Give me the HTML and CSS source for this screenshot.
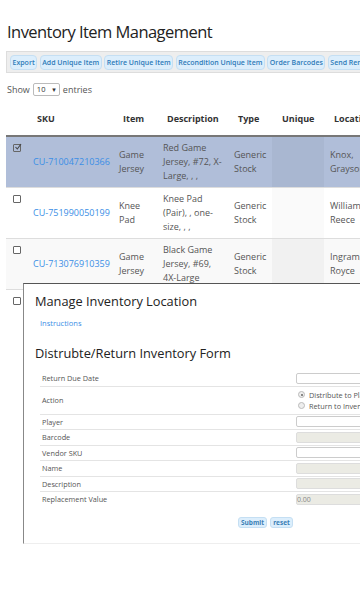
FILE: index.html
```html
<!DOCTYPE html>
<html>
<head>
<meta charset="utf-8">
<link rel="stylesheet" href="styles.css">
</head>
<body>
<h1 class="title">Inventory Item Management</h1>
<div class="toolbar">
  <button class="tbtn">Export</button>
  <button class="tbtn">Add Unique Item</button>
  <button class="tbtn">Retire Unique Item</button>
  <button class="tbtn">Recondition Unique Item</button>
  <button class="tbtn">Order Barcodes</button>
  <button class="tbtn">Send Reminders</button>
</div>
<div class="length">Show <span class="select">10 <span class="caret">▾</span></span> entries</div>
<div class="tablewrap">
<table class="grid">
  <colgroup>
    <col class="c0"><col class="c1"><col class="c2"><col class="c3"><col class="c4"><col class="c5"><col class="c6">
  </colgroup>
  <thead>
    <tr><th></th><th>SKU</th><th>Item</th><th>Description</th><th>Type</th><th>Unique</th><th>Location</th></tr>
  </thead>
  <tbody>
    <tr class="sel">
      <td><span class="cb checked"><svg viewBox="0 0 8 8" width="8" height="8"><path d="M1.5 4 L3.3 6 L7 1" fill="none" stroke="#444" stroke-width="1.1"/></svg></span></td>
      <td class="mid"><a class="sku">CU-710047210366</a></td>
      <td class="mid">Game<br>Jersey</td>
      <td>Red Game<br>Jersey, #72, X-<br>Large, , ,</td>
      <td class="mid">Generic<br>Stock</td>
      <td class="sorted"></td>
      <td class="mid">Knox,<br>Grayson</td>
    </tr>
    <tr class="even">
      <td><span class="cb"></span></td>
      <td class="mid"><a class="sku">CU-751990050199</a></td>
      <td class="mid">Knee<br>Pad</td>
      <td>Knee Pad<br>(Pair), , one-<br>size, , ,</td>
      <td class="mid">Generic<br>Stock</td>
      <td class="sorted"></td>
      <td class="mid">William,<br>Reece</td>
    </tr>
    <tr class="odd">
      <td><span class="cb"></span></td>
      <td class="mid"><a class="sku">CU-713076910359</a></td>
      <td class="mid">Game<br>Jersey</td>
      <td>Black Game<br>Jersey, #69,<br>4X-Large</td>
      <td class="mid">Generic<br>Stock</td>
      <td class="sorted"></td>
      <td class="mid">Ingram,<br>Royce</td>
    </tr>
    <tr class="even">
      <td><span class="cb"></span></td>
      <td class="mid"><a class="sku">CU-713076910360</a></td>
      <td class="mid">Game<br>Jersey</td>
      <td>Black Game<br>Jersey, #70,<br>4X-Large</td>
      <td class="mid">Generic<br>Stock</td>
      <td class="sorted"></td>
      <td class="mid">Ingram,<br>Royce</td>
    </tr>
  </tbody>
</table>

<div class="modal">
  <h2 class="mtitle">Manage Inventory Location</h2>
  <a class="instr">Instructions</a>
  <h2 class="ftitle">Distrubte/Return Inventory Form</h2>
  <div class="form">
    <div class="frow"><span class="lbl">Return Due Date</span><span class="inp"></span></div>
    <div class="frow act"><span class="lbl">Action</span>
      <span class="radios">
        <span class="radio"><span class="dot on"></span>Distribute to Player</span>
        <span class="radio"><span class="dot"></span>Return to Inventory</span>
      </span>
    </div>
    <div class="frow"><span class="lbl">Player</span><span class="inp"></span></div>
    <div class="frow"><span class="lbl">Barcode</span><span class="inp dis"></span></div>
    <div class="frow"><span class="lbl">Vendor SKU</span><span class="inp"></span></div>
    <div class="frow"><span class="lbl">Name</span><span class="inp dis"></span></div>
    <div class="frow"><span class="lbl">Description</span><span class="inp dis"></span></div>
    <div class="frow last"><span class="lbl">Replacement Value</span><span class="inp dis">0.00</span></div>
  </div>
  <div class="actions">
    <button class="sbtn">Submit</button><button class="sbtn">reset</button>
  </div>
</div>
</div>
</body>
</html>
```
FILE: styles.css
```css
html, body { margin: 0; padding: 0; overflow: hidden; background: #fff; }
body { font-family: "Open Sans", "DejaVu Sans", sans-serif; color: #333; width: 360px; height: 600px; }
.title { font-weight: 400; font-size: 16.5px; letter-spacing: -0.55px; margin: 0; padding: 20px 0 0 7px; height: 31px; line-height: 24px; color: #222; white-space: nowrap; }
.toolbar { margin-left: 6px; width: 420px; height: 20px; background: #eee; border: 1px solid #ddd; display: flex; align-items: center; gap: 2.5px; padding-left: 3px; white-space: nowrap; overflow: hidden; }
.tbtn { font-family: inherit; font-size: 7px; font-weight: 600; color: #2e7ab8; background: #dceefc; border: 1px solid #c5dff3; border-radius: 4px; height: 15px; padding: 0 1.5px; line-height: 13px; flex: none; }
.length { margin: 10px 0 0 7px; font-size: 9px; color: #555; display: flex; align-items: center; gap: 3px; height: 12px; }
.select { display: inline-flex; align-items: center; justify-content: space-between; width: 19px; height: 11px; border: 1px solid #bbb; border-radius: 2px; padding: 0 3px; font-size: 7.5px; color: #333; }
.caret { font-size: 7px; }
.tablewrap { position: relative; margin-top: 7px; }
.grid { margin-left: 6px; border-collapse: collapse; table-layout: fixed; width: 420px; font-size: 9px; line-height: 14px; color: #555; }
.c0 { width: 21px; } .c1 { width: 86px; } .c2 { width: 44px; } .c3 { width: 71px; } .c4 { width: 44px; } .c5 { width: 52px; } .c6 { width: 102px; }
.grid th { text-align: left; font-weight: 700; color: #333; padding: 0 0 0 10px; height: 33px; border-bottom: 2px solid #777; white-space: nowrap; }
.grid td { padding: 4px 0 4px 6px; vertical-align: top; height: 50px; box-sizing: border-box; border-top: 1px solid #ddd; white-space: nowrap; }
.grid td.mid { vertical-align: middle; }
.grid tr.sel td { background: #b0bed9; border-top-color: #b0bed9; }
.grid tr.sel td.sorted { background: #a9b7d1; }
.grid tr.even td { background: #fff; }
.grid tr.even td.sorted { background: #fafafa; }
.grid tr.odd td { background: #f9f9f9; }
.grid tr.odd td.sorted { background: #f1f1f1; }
.cb { display: block; width: 6px; height: 6px; border: 1px solid #666; border-radius: 1px; margin: 3px 0 0 1px; background: #fff; position: relative; }
.cb.checked { background: transparent; }
.cb svg { position: absolute; left: 0; top: -2px; }
.sku { color: #3a8ee6; text-decoration: none; }
.modal { position: absolute; left: 23px; top: 181px; width: 360px; height: 261px; background: #fff; border: 1px solid #888; border-top-color: #555; border-bottom-color: #eee; box-sizing: border-box; padding: 8px 0 0 11px; }
.mtitle { font-weight: 400; font-size: 12.8px; margin: 0; color: #222; height: 18px; line-height: 18px; white-space: nowrap; }
.instr { display: block; font-size: 7.5px; color: #3a8ee6; margin: 8px 0 0 5px; line-height: 10px; }
.ftitle { font-weight: 400; font-size: 12.8px; margin: 16px 0 0 0; color: #222; line-height: 18px; white-space: nowrap; }
.form { margin: 9px 0 0 5px; font-size: 7.3px; color: #555; }
.frow { display: flex; align-items: center; height: 14.5px; border-bottom: 1px solid #e4e4e4; }
.frow.act { height: 27px; }
.frow.last { border-bottom: none; }
.lbl { width: 254px; padding-left: 2px; flex: none; }
.inp { width: 120px; height: 9px; border: 1px solid #ccc; border-radius: 2px; background: #fff; flex: none; font-size: 7px; color: #888; line-height: 9px; }
.inp.dis { background: #ebebe4; border-color: #ddd; }
.radios { display: flex; flex-direction: column; gap: 1px; }
.radio { display: flex; align-items: center; gap: 4px; white-space: nowrap; line-height: 10px; }
.dot { width: 5px; height: 5px; border-radius: 50%; border: 1px solid #bbb; background: #eee; margin-left: 2px; position: relative; }
.dot.on::after { content: ""; position: absolute; left: 1.5px; top: 1.5px; width: 2px; height: 2px; border-radius: 50%; background: #666; }
.actions { margin: 10px 0 0 203px; display: flex; gap: 3px; }
.sbtn { font-family: inherit; font-size: 6.5px; font-weight: 700; color: #3b7fb5; background: #dceefc; border: 1px solid #c5dff3; border-radius: 3px; height: 11px; padding: 0 2px; line-height: 9px; }
```
